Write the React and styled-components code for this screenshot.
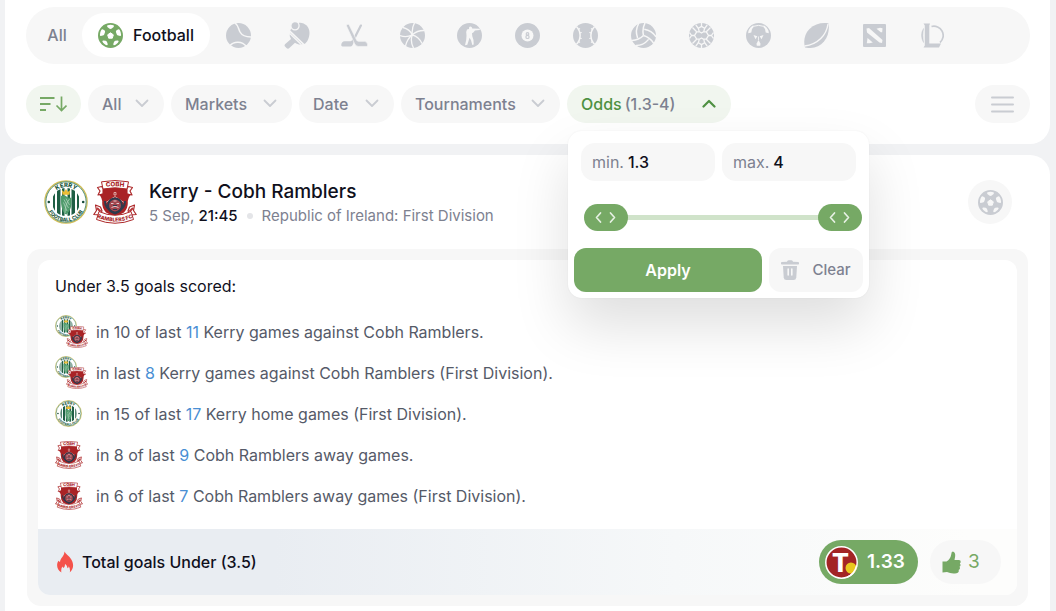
import React, { useState } from "react";
import styled, { createGlobalStyle, css } from "styled-components";

const c = {
  page: "#f1f2f4",
  pill: "#f7f7f7",
  icon: "#c9ccd2",
  muted: "#7d8190",
  text: "#555a68",
  dark: "#10101c",
  green: "#76a965",
  deepGreen: "#4f9142",
  paleGreen: "#f1f6ef",
  link: "#4a8fd4",
};

const GlobalStyle = createGlobalStyle`
  * { box-sizing: border-box; }
  body {
    margin: 0;
    background: ${c.page};
    color: ${c.dark};
    font-family: Inter, "Liberation Sans", sans-serif;
    font-size: 16px;
    line-height: 20px;
  }
  button, input { font: inherit; color: inherit; }
  button { border: 0; padding: 0; background: none; cursor: pointer; }
  h1, h2, p, ul { margin: 0; padding: 0; }
  svg { display: block; flex: none; }
`;

/* ---------- layout ---------- */

const Page = styled.div`
  min-height: 100vh;
  display: flex;
  flex-direction: column;
  gap: 11px;
  padding: 0 6px 0 5px;
`;

const TopCard = styled.header`
  display: flex;
  flex-direction: column;
  gap: 21px;
  padding: 7px 20px 21px 21px;
  background: #fff;
  border-radius: 0 0 20px 20px;
`;

const SportsBar = styled.nav`
  display: flex;
  align-items: center;
  height: 57px;
  padding: 0 69px 1px 6px;
  border-radius: 29px;
  background: ${c.pill};
`;

const SportTab = styled.button`
  display: flex;
  align-items: center;
  justify-content: center;
  gap: 10px;
  height: 44px;
  border-radius: 22px;
  font-weight: 500;
  color: ${(p) => (p.$active ? c.dark : c.muted)};
  background: ${(p) => (p.$active ? "#fff" : "transparent")};
  min-width: ${(p) => (p.$active ? "128px" : "50px")};
  svg { color: ${(p) => (p.$active ? c.green : c.icon)}; }
`;

const SportGrid = styled.div`
  flex: 1;
  display: grid;
  grid-template-columns: repeat(13, 1fr);
`;

const SportIconButton = styled.button`
  display: flex;
  align-items: center;
  justify-content: center;
  height: 44px;
  color: ${c.icon};
`;

const Filters = styled.div`
  display: flex;
  gap: 7px;
`;

const FilterSlot = styled.div`
  position: relative;
  display: flex;
`;

const FilterButton = styled.button`
  display: flex;
  align-items: center;
  justify-content: space-between;
  height: 38px;
  min-width: ${(p) => p.$min}px;
  padding: 0 15px 1px 14px;
  border-radius: 19px;
  font-weight: 500;
  white-space: nowrap;
  color: ${c.muted};
  background: ${(p) => (p.$active ? c.paleGreen : c.pill)};
  strong { margin-right: 3px; font-weight: 500; color: ${c.deepGreen}; }
  svg { color: ${(p) => (p.$active ? c.deepGreen : c.icon)}; }
`;

const RoundButton = styled(FilterButton)`
  justify-content: center;
  padding: 0 14px;
  margin-left: ${(p) => (p.$end ? "auto" : "0")};
  svg { color: ${(p) => (p.$active ? c.green : c.icon)}; }
`;

/* ---------- odds popover ---------- */

const Popover = styled.form`
  position: absolute;
  z-index: 2;
  top: 46px;
  left: 1px;
  width: 301px;
  display: flex;
  flex-direction: column;
  padding: 12px 6px 6px;
  border-radius: 14px;
  background: #fff;
  box-shadow: 0 0 2px rgba(0, 0, 0, 0.06), 0 28px 56px rgba(0, 0, 0, 0.13);
`;

const Limits = styled.div`
  display: flex;
  gap: 7px;
  padding: 0 7px;
`;

const Limit = styled.label`
  flex: 1;
  min-width: 0;
  display: flex;
  align-items: center;
  gap: 4px;
  height: 38px;
  padding: 0 11px;
  border-radius: 14px;
  color: ${c.muted};
  background: ${c.pill};
`;

const LimitInput = styled.input`
  flex: 1;
  min-width: 0;
  padding: 0;
  border: 0;
  outline: 0;
  background: none;
  font-weight: 500;
  color: ${c.dark};
`;

const RangeTrack = styled.div`
  display: grid;
  align-items: center;
  height: 27px;
  margin: 23px 1px 17px 10px;
  background: linear-gradient(#d0e3ca, #d0e3ca) center / 90% 5px no-repeat;
`;

const arrows = encodeURIComponent(
  '<svg xmlns="http://www.w3.org/2000/svg" width="44" height="27" fill="none" stroke="#e6f0e3" stroke-width="1.7" stroke-linecap="round" stroke-linejoin="round"><path d="M16.5 9 12.500 13.500 16.500 18M26.500 9 30.500 13.500 26.500 18"/></svg>'
);

const RangeInput = styled.input`
  grid-area: 1 / 1;
  appearance: none;
  width: 100%;
  height: 27px;
  margin: 0;
  background: none;
  pointer-events: none;
  &::-webkit-slider-thumb {
    appearance: none;
    pointer-events: auto;
    width: 44px;
    height: 27px;
    border-radius: 14px;
    background: ${c.green} url("data:image/svg+xml,${arrows}") center no-repeat;
  }
`;

const Actions = styled.div`
  display: flex;
  gap: 7px;
`;

const ActionButton = styled.button`
  display: flex;
  align-items: center;
  justify-content: center;
  height: 44px;
  border-radius: 12px;
  ${(p) =>
    p.$primary
      ? css`
          flex: 1;
          font-weight: 600;
          color: #fff;
          background: ${c.green};
        `
      : css`
          gap: 13px;
          width: 94px;
          font-size: 15px;
          font-weight: 500;
          color: ${c.muted};
          background: ${c.pill};
          svg { color: ${c.icon}; }
        `}
`;

/* ---------- match card ---------- */

const MatchCard = styled.main`
  flex: 1;
  padding: 25px 22px 5px;
  background: #fff;
  border-radius: 20px 20px 0 0;
`;

const MatchHead = styled.div`
  display: flex;
  align-items: center;
  gap: 12px;
  padding: 0 16px 0 17px;
`;

const Crests = styled.div`
  display: flex;
  gap: 5px;
`;

const MatchInfo = styled.div`
  flex: 1;
  display: flex;
  flex-direction: column;
  gap: 4px;
`;

const MatchTitle = styled.h1`
  font-size: 19px;
  font-weight: 500;
  line-height: 24px;
`;

const MatchMeta = styled.p`
  display: flex;
  align-items: center;
  font-size: 15px;
  line-height: 16px;
  color: ${c.muted};
  white-space: pre;
  time { font-weight: 500; color: ${c.dark}; }
`;

const Dot = styled.span`
  width: 6px;
  height: 6px;
  margin: 0 9px;
  border-radius: 50%;
  background: #e4e5e8;
`;

const SportBadge = styled.span`
  display: grid;
  place-items: center;
  width: 44px;
  height: 44px;
  border-radius: 50%;
  color: ${c.icon};
  background: ${c.pill};
`;

const Panel = styled.section`
  margin-top: 25px;
  padding: 11px;
  border-radius: 14px;
  background: ${c.pill};
`;

const PanelInner = styled.div`
  overflow: hidden;
  border-radius: 12px;
  background: #fff;
`;

const PanelBody = styled.div`
  padding: 16px 17px 13px;
`;

const PanelTitle = styled.h2`
  font-size: 16px;
  font-weight: 400;
  line-height: 20px;
`;

const FactList = styled.ul`
  margin-top: 15px;
  list-style: none;
`;

const Fact = styled.li`
  display: flex;
  align-items: center;
  gap: 8px;
  height: 41px;
  color: ${c.text};
  a { color: ${c.link}; text-decoration: none; }
`;

const FactCrest = styled.span`
  display: flex;
  width: 33px;
`;

const CrestPair = styled.span`
  display: grid;
  width: 33px;
  height: 33px;
  svg { grid-area: 1 / 1; }
  svg:last-child { place-self: end; }
`;

const PanelFoot = styled.div`
  display: flex;
  align-items: center;
  gap: 12px;
  height: 66px;
  padding: 0 16px 0 19px;
  background: linear-gradient(90deg, #e9edf2 0%, #e9edf2 24%, #f6f8f9 65%, #fdfdfc 95%);
`;

const Pick = styled.p`
  flex: 1;
  display: flex;
  align-items: center;
  gap: 8px;
  font-weight: 500;
`;

const FootButton = styled.button`
  display: flex;
  align-items: center;
  height: 44px;
  border-radius: 22px;
  ${(p) =>
    p.$odds
      ? css`
          gap: 9px;
          min-width: 99px;
          padding: 0 6px;
          font-size: 19px;
          font-weight: 600;
          color: #fff;
          background: ${c.green};
        `
      : css`
          gap: 7px;
          min-width: 71px;
          padding: 0 12px;
          font-size: 19px;
          color: ${c.green};
          background: ${c.pill};
        `}
`;

/* ---------- drawings ---------- */

const Svg = ({ w = 25, h = 25, children, ...rest }) => (
  <svg width={w} height={h} viewBox={`0 0 ${w} ${h}`} fill="currentColor" aria-hidden="true" {...rest}>
    {children}
  </svg>
);

const Cut = ({ width = 1.3, children, color = c.pill }) => (
  <g fill="none" stroke={color} strokeWidth={width} strokeLinejoin="round">{children}</g>
);

const Football = ({ cut = c.pill }) => (
  <Svg>
    <circle cx="12.5" cy="12.5" r="12.5" />
    <g fill={cut}>
      <path d="M12.500 9.800 15.300 11.800 14.300 15.200H10.700L9.700 11.800Z" stroke={cut} strokeLinejoin="round" />
      <path d="M9.500 2.300Q12.500 1.400 15.500 2.300Q16.300 3 15.600 4L13.800 5.600Q12.500 6.200 11.200 5.600L9.400 4Q8.700 3 9.500 2.300Z" />
      <path d="M3.400 6.800Q4.200 6 5.100 6.500L6.700 7.600Q7.300 8.300 7 9.200L6.200 11.400Q5.700 12.300 4.700 12.500L2.800 12.900Q1.900 12.800 1.900 11.900Q2 9 3.400 6.800Z" />
      <path d="M21.600 6.800Q20.800 6 19.900 6.500L18.300 7.600Q17.700 8.300 18 9.200L18.800 11.400Q19.300 12.300 20.300 12.500L22.200 12.900Q23.100 12.800 23.100 11.900Q23 9 21.600 6.800Z" />
      <path d="M4.300 18.300Q4.500 17.300 5.500 17.400L7.700 17.800Q8.600 18.200 9 19L9.700 20.900Q9.900 21.900 9.100 22.200Q8 22.200 6.500 21Q4.800 19.700 4.300 18.300Z" />
      <path d="M20.700 18.300Q20.500 17.300 19.500 17.400L17.300 17.800Q16.400 18.200 16 19L15.300 20.900Q15.100 21.900 15.900 22.200Q17 22.200 18.500 21Q20.200 19.700 20.700 18.300Z" />
    </g>
  </Svg>
);

const Tennis = () => (
  <Svg>
    <circle cx="12.5" cy="12.5" r="12.5" />
    <Cut width={1.5}>
      <path d="M9 0C12.500 2.500 12.300 6 14 9C16.300 13 20 14 25 14" />
      <path d="M4 22.500C8 18 16 18 20.500 23.500" />
    </Cut>
  </Svg>
);

const TableTennis = () => (
  <Svg w={26} h={27}>
    <path d="M14.500 1C20 0 25.500 4.500 25.500 11C25.500 16 23 20.500 20.500 22L6.300 8.500C7.600 4.500 10.500 1.800 14.500 1Z" />
    <path d="M6 10.500 18.500 22.200C16 23 13.300 22.400 11 20.700L4.800 26.500Q3.500 27 2.500 26L.8 24.200Q.1 23.200 1 22.300L7 17Q5 14 6 10.500Z" />
    <Cut width={1.3}><path d="M5.500 11.200 17.500 22.700" /></Cut>
    <circle cx="11" cy="3.800" r="4.100" stroke={c.pill} strokeWidth="1.300" />
  </Svg>
);

const Hockey = () => (
  <Svg w={27} h={23}>
    <path d="M19 .8Q19.500 .1 20.500 .6Q21.300 1 21 1.800L12.500 18.500Q11.500 22.400 9.500 22.400H1.500Q.2 22.400.2 21Q.8 17.400 3.500 17.300H9.500Q10.800 17 11.500 15.500Z" />
    <path d="M5.400 1.800Q5.200 .9 6.200 .5Q7.500 0 8.100.8L15.700 16.300Q16.200 17.300 17.500 17.300H23.500Q26.300 17.500 26.800 21Q26.800 22.400 25.500 22.400H17.200Q14.500 22.400 13.500 19.500Z" stroke={c.pill} strokeWidth=".7" />
  </Svg>
);

const Basketball = () => (
  <Svg>
    <circle cx="12.500" cy="12.500" r="12.500" />
    <Cut width={1.3}>
      <path d="M12.300 11.800C11.800 7.500 12.500 3.500 14.500 0" />
      <path d="M12.300 11.800C15.500 9 20 7.300 24.500 7.500" />
      <path d="M3 4.500C7 5.500 10.500 8 12.300 11.800" />
      <path d="M0 12.500C4 14 8.500 13.800 12.300 11.800" />
      <path d="M5.500 23C6.500 18.500 9 14.500 12.300 11.800" />
      <path d="M12.300 11.800C16 12.800 20 16 22 20.500" />
      <path d="M12.300 11.800C10.800 16 11.300 21 13.500 25" />
    </Cut>
  </Svg>
);

const Shooter = () => (
  <Svg>
    <circle cx="12.500" cy="12.500" r="12.500" />
    <path fill={c.pill} d="M12.200 3.900Q13.500 3 14.800 4.300L15.200 5.500 22.800 5.800 22.800 7 18 7.400 16.300 9.500 15 10.300 15.300 13.300 16.500 17 16.700 21.500 15.300 22 14.100 17.500 12.600 14.800 11.700 17.500 10.300 21.700 8 22.300 9.200 17 9.500 12.500 9.200 9 10 6.500 12 6Z" />
  </Svg>
);

const Billiards = () => (
  <Svg>
    <circle cx="12.500" cy="12.500" r="12.500" />
    <circle cx="12.500" cy="12.500" r="6" fill={c.pill} />
    <g fill="none" stroke="currentColor" strokeWidth="1.200">
      <circle cx="12.500" cy="10.900" r="1.300" />
      <circle cx="12.500" cy="13.900" r="1.600" />
    </g>
  </Svg>
);

const Baseball = () => (
  <Svg>
    <circle cx="12.500" cy="12.500" r="12.500" />
    <Cut width={1.5}>
      <path d="M3.500 3.800C8.300 8.500 8.300 16.500 3.500 21.200M21.500 3.800C16.700 8.500 16.700 16.500 21.500 21.200" />
    </Cut>
    <Cut width={1.1}>
      <path d="M7 5.500 5 6.800M8.700 9.500 6 10M8.700 15.500 6 15M7 19.500 5 18.200M18 5.500 20 6.800M16.300 9.500 19 10M16.300 15.500 19 15M18 19.500 20 18.200" />
    </Cut>
  </Svg>
);

const Volleyball = () => (
  <Svg>
    <circle cx="12.500" cy="12.500" r="12.500" />
    <Cut width={1.5}>
      {[0, 120, 240].map((angle) => (
        <g key={angle} transform={`rotate(${angle} 12.500 12.500)`}>
          <path d="M12.500 12.500C11.500 8.500 12 4 14 0" />
          <path d="M6.600 15C4.800 10 5.200 5 7.500 1" />
        </g>
      ))}
    </Cut>
  </Svg>
);

const Handball = () => (
  <Svg>
    <circle cx="12.500" cy="12.500" r="12.500" />
    <Cut width={1.300}>
      <path d="M5.500 12.500 7.700 8.800 10.500 8.800 12.500 10 14.500 8.800 17.300 8.800 19.500 12.500 17.300 16.200 14.500 16.200 12.500 15 10.500 16.200 7.700 16.200Z" />
      <path d="M10.300 8.800 9.400 5.300 12.500 3.400 15.600 5.300 14.700 8.800M10.300 16.200 9.400 19.700 12.500 21.600 15.600 19.700 14.700 16.200" />
      <path d="M12.500 3.400V0M12.500 21.600V25M9.400 5.300 6.800 2M15.600 5.300 18.200 2M9.400 19.700 6.800 23M15.600 19.700 18.200 23" />
      <path d="M7.700 8.800 3.500 4.500M17.300 8.800 21.500 4.500M7.700 16.200 3.500 20.500M17.300 16.200 21.500 20.500" />
      <path d="M5.500 12.500H2.600L.5 9.500M2.600 12.500 .5 15.500M19.500 12.500H22.400L24.500 9.500M22.400 12.500 24.500 15.500" />
    </Cut>
  </Svg>
);

const Futsal = () => (
  <Svg>
    <circle cx="12.500" cy="12.500" r="12.500" />
    <g fill={c.pill}>
      <path d="M2.800 7Q4.300 3.800 7.200 2.200L8 3.500 6 6 5.300 9.500 2.200 10.300Q2.200 8.500 2.800 7Z" />
      <path d="M22.200 7Q20.700 3.800 17.800 2.200L17 3.500 19 6 19.700 9.500 22.800 10.300Q22.800 8.500 22.200 7Z" />
      <path d="M7.500 12 11.300 13.300 9.500 16.200Z" />
      <path d="M17.500 12 13.700 13.300 15.500 16.200Z" />
      <path d="M12.500 17 14.500 20.800 14.200 22.800H10.800L10.500 20.800Z" />
    </g>
    <Cut width={1}>
      <path d="M8 3.200Q12.500 1.600 17 3.200" />
      <path d="M12.500 13.500V17" strokeWidth=".8" />
    </Cut>
  </Svg>
);

const Rugby = () => (
  <Svg>
    <path d="M24.500.4C25.500 6 24.500 13 20 18.500C15.500 24 8 26 1 24.600C-.8 18 .5 11 5.500 6C10.500 1 18 -.8 24.500.4Z" />
    <Cut width={1.4}>
      <path d="M24 1C22.500 12 14 21.500 .5 23" />
    </Cut>
  </Svg>
);

const Dota = () => (
  <Svg w={23} h={23}>
    <rect width="23" height="23" rx="1" />
    <g fill={c.pill}>
      <path d="M3.500 4.500 6 4 19.500 16 19 19 16.500 18.500 4 8.500Z" />
      <path d="M13.500 4.800 17 3.800 19.500 4.300 19.200 8.300 17.800 8.300Z" />
      <path d="M4.500 14 9.800 18.500 6.500 19.200 3.800 19.200Z" />
    </g>
  </Svg>
);

const Legends = () => (
  <Svg w={23} h={25}>
    <path d="M2.500.5H9L8.300 2.500V20.500H20L18 24.500H2.500L3.800 22.500V2.500Z" />
    <path d="M10.500 3.500A9.300 9.300 0 0 1 19 19.500" fill="none" stroke="currentColor" strokeWidth="1.700" />
    <path d="M2.500 5.500Q-1.500 12 2.500 19.500Q1.200 12 2.500 5.500Z" stroke="currentColor" strokeWidth=".5" />
  </Svg>
);

const Chevron = ({ up }) => (
  <Svg w={14} h={9}>
    <path
      d={up ? "M1.500 7.500 7 2 12.500 7.500" : "M1.500 1.500 7 7 12.500 1.500"}
      fill="none" stroke="currentColor" strokeWidth={up ? 2.2 : 1.8} strokeLinecap="round" strokeLinejoin="round"
    />
  </Svg>
);

const SortIcon = () => (
  <Svg w={27} h={16}>
    <path d="M0 2H14.500M0 8H10.500M0 14H6" stroke="currentColor" strokeWidth="2" />
    <path d="M21.500.5V14.500M16.500 9.500 21.500 14.500 26.500 9.500" fill="none" stroke="currentColor" strokeWidth="1.700" />
  </Svg>
);

const MenuIcon = () => (
  <Svg w={23} h={17}>
    <path d="M1 1.500H22M1 8.500H22M1 15.500H22" stroke="currentColor" strokeWidth="2" strokeLinecap="round" />
  </Svg>
);

const Trash = () => (
  <Svg w={18} h={20}>
    <path d="M6 1.800Q6.200.3 7.500.3H10.500Q11.800.3 12 1.800L17.200 2Q18 2.200 18 3V3.800Q18 4.500 17.200 4.500H.8Q0 4.500 0 3.800V3Q0 2.200.8 2Z" />
    <path d="M2 6H16L15.300 17.500Q15 20 12.500 20H5.500Q3 20 2.700 17.500Z" />
    <path d="M7.200 9V15M10.800 9V15" stroke={c.pill} strokeWidth="1.600" strokeLinecap="round" />
  </Svg>
);

const Flame = () => (
  <Svg w={17} h={22}>
    <path
      fill="#f4524b"
      d="M7.500.5C8.500 3 12 4.800 14 8C16.500 12 17.500 17 12.800 21.500C13.300 19 12.800 17 11.800 15.200C11.600 16.500 11.200 17 10.500 17.300C10.300 15.500 9.500 14 8 13C8 15 7.500 16 6.500 17C6 16.500 5.500 16 5.300 15.500C4.200 17.500 4 19.500 4.400 21.500C-.5 18.500-.8 13 1.500 9.800C2 10.500 2.400 10.800 3 11C3.300 7 7.500 5 7.500.5Z"
    />
  </Svg>
);

const Thumb = () => (
  <Svg w={19} h={23}>
    <path d="M.5 10.500H4.500Q8.500 8 9.200 3.500Q9.400.7 10.800.5Q13.500 1 13.200 5L12.500 9H17Q18.800 9.300 18.700 10.800Q18.700 12 17.800 12.500Q18.800 13.300 18.500 14.500Q18.300 15.500 17.500 15.800Q18.300 16.700 17.900 17.800Q17.500 18.800 16.600 19Q17.200 20 16.500 21Q16 22 14.500 22.200Q9 23 5 21L.5 21.500Z" />
  </Svg>
);

const BookmakerLogo = () => (
  <Svg w={33} h={33}>
    <circle cx="16.500" cy="16.500" r="15.700" fill="#a32425" stroke="#fff" strokeWidth="1.500" />
    <text x="15.500" y="26" textAnchor="middle" fontFamily="Roboto, sans-serif" fontWeight="900" fontSize="26" fill="#fff">T</text>
    <circle cx="26" cy="22" r="5.500" fill="#e9c81f" />
    <path d="M31.500 20A15.700 15.700 0 0 1 22 31.200" fill="none" stroke="#fff" strokeWidth="1.500" />
  </Svg>
);

const KerryCrest = ({ size }) => (
  <svg width={size} height={size} viewBox="0 0 44 44" role="img" aria-label="Kerry">
    <defs>
      <path id="kerry-top" d="M7 22A15 15 0 0 1 37 22" />
      <path id="kerry-bottom" d="M2.500 22A19.500 19.500 0 0 0 41.500 22" />
      <clipPath id="kerry-core"><circle cx="22" cy="22" r="14" /></clipPath>
    </defs>
    <circle cx="22" cy="22" r="21.200" fill="#fff" stroke="#d3bd55" strokeWidth="1.200" />
    <circle cx="22" cy="22" r="20.200" fill="none" stroke="#3d7f5f" strokeWidth=".9" />
    <g clipPath="url(#kerry-core)">
      <path fill="#1f5f45" d="M9 8h2v28H9zM13 8h3.500v28H13zM18 8h2.500v28H18zM23.500 8H26v28h-2.500zM27.500 8H31v28h-3.500zM33 8h2v28h-2z" />
      <path fill="#4f9b6c" d="M17 16Q20 14.500 22.500 16.500 25 18.500 27.500 17.500V24Q27 30 22.500 34.500 20 34 18.500 30 16.500 25 17 16Z" />
      <path d="M20 19.500 24.500 28M22 18.500 25.500 25M19.500 22.500 23 31M25.500 19Q21 24 21 33" stroke="#b7d8c3" strokeWidth=".7" fill="none" />
      <path fill="#edbd34" d="M17.800 10 20.200 12 22 9 23.800 12 26.200 10 25.500 14.800H18.500Z" />
    </g>
    <circle cx="4.800" cy="22" r="1.300" fill="#174a39" />
    <circle cx="39.200" cy="22" r="1.300" fill="#174a39" />
    <g fill="#1e5a41" fontFamily="Inter, sans-serif" fontWeight="800" textAnchor="middle">
      <text fontSize="6"><textPath href="#kerry-top" startOffset="50%">KERRY</textPath></text>
      <text fontSize="5"><textPath href="#kerry-bottom" startOffset="50%">FOOTBALL CLUB</textPath></text>
    </g>
  </svg>
);

const CobhCrest = ({ size }) => (
  <svg width={size} height={size} viewBox="0 0 44 44" role="img" aria-label="Cobh Ramblers">
    <defs>
      <path id="cobh-top" d="M10 7.300Q22 5.300 34 7.300" />
      <path id="cobh-bottom" d="M4 37.500Q22 45.500 40 37.500" />
    </defs>
    <path fill="#fff" stroke="#ad2a2b" strokeWidth="1.200" strokeLinejoin="round" d="M8.500 6.500 4.500 7.500 7 11 5 15 10.500 14V9ZM35.500 6.500 39.500 7.500 37 11 39 15 33.500 14V9Z" />
    <path fill="#a92326" d="M9.500 8.500Q22 6.500 34.500 8.500V13.500L38 14.500Q34.500 18 34.800 23 35 28 31 32.500L22 37 13 32.500Q9 28 9.200 23 9.500 18 6 14.500L9.500 13.500Z" />
    <path fill="#fff" stroke="#ad2a2b" strokeWidth="1" strokeLinejoin="round" d="M8.500 1.800Q22-.8 35.500 1.800L34 9Q22 6.500 10 9Z" />
    <path fill="none" stroke="#eac4c2" strokeWidth=".8" d="M21 12.500H23V15H21ZM22 16.500 13 22.500M22 16.500 31 22.500" />
    <circle cx="22" cy="25.500" r="7" fill="#a3464e" stroke="#2f3a4c" strokeWidth="2" />
    <path d="M12 21Q11.500 28.500 22 33.500Q32.500 28.500 32 21" fill="none" stroke="#2f3a4c" strokeWidth="2" />
    <path d="M18 23.500H20.500M23.500 23.500H26M18.500 27.500Q22 25 25.500 27.500M20.500 21H23.500" stroke="#e3c6ca" strokeWidth="1" fill="none" />
    <path d="M20 25.500H24M20 29.500H24" stroke="#2f3a4c" strokeWidth="1" />
    <path fill="#fff" stroke="#ad2a2b" strokeWidth="1.200" strokeLinejoin="round" d="M2.500 25 7.500 27 9 31 6.500 35 .8 34.500 3.500 30.500ZM41.500 25 36.500 27 35 31 37.500 35 43.200 34.500 40.500 30.500Z" />
    <path d="M4 28 7.500 31.500M40 28 36.500 31.500" stroke="#b8383a" strokeWidth="2" />
    <path fill="#fff" stroke="#ad2a2b" strokeWidth="1" strokeLinejoin="round" d="M6 31.500Q22 39 38 31.500L40.500 39.500Q22 47 3.500 39.500Z" />
    <g fill="#a92326" fontFamily="Inter, sans-serif" fontWeight="800" textAnchor="middle">
      <text fontSize="6.200"><textPath href="#cobh-top" startOffset="50%">COBH</textPath></text>
      <text fontSize="5.200"><textPath href="#cobh-bottom" startOffset="50%">RAMBLERS FC</textPath></text>
    </g>
  </svg>
);

/* ---------- data ---------- */

const sports = [
  ["Tennis", Tennis],
  ["Table tennis", TableTennis],
  ["Ice hockey", Hockey],
  ["Basketball", Basketball],
  ["Counter-Strike", Shooter],
  ["Billiards", Billiards],
  ["Baseball", Baseball],
  ["Volleyball", Volleyball],
  ["Handball", Handball],
  ["Futsal", Futsal],
  ["Rugby", Rugby],
  ["Dota 2", Dota],
  ["League of Legends", Legends],
];

const filters = [
  ["All", 76],
  ["Markets", 121],
  ["Date", 95],
  ["Tournaments", 159],
];

const facts = [
  { team: "both", before: "in 10 of last ", count: 11, after: " Kerry games against Cobh Ramblers." },
  { team: "both", before: "in last ", count: 8, after: " Kerry games against Cobh Ramblers (First Division)." },
  { team: "kerry", before: "in 15 of last ", count: 17, after: " Kerry home games (First Division)." },
  { team: "cobh", before: "in 8 of last ", count: 9, after: " Cobh Ramblers away games." },
  { team: "cobh", before: "in 6 of last ", count: 7, after: " Cobh Ramblers away games (First Division)." },
];

const TeamCrest = ({ team }) => {
  if (team === "both") {
    return (
      <CrestPair>
        <KerryCrest size={22} />
        <CobhCrest size={22} />
      </CrestPair>
    );
  }
  return team === "kerry" ? <KerryCrest size={27} /> : <CobhCrest size={28} />;
};

const OddsFilter = () => {
  const [min, setMin] = useState(1.3);
  const [max, setMax] = useState(4);
  return (
    <FilterSlot>
      <FilterButton type="button" $active $min={164} aria-expanded="true">
        <span><strong>Odds</strong>({min}-{max})</span>
        <Chevron up />
      </FilterButton>
      <Popover onSubmit={(e) => e.preventDefault()}>
        <Limits>
          <Limit>min. <LimitInput value={min} onChange={(e) => setMin(e.target.value)} /></Limit>
          <Limit>max. <LimitInput value={max} onChange={(e) => setMax(e.target.value)} /></Limit>
        </Limits>
        <RangeTrack>
          <RangeInput type="range" aria-label="Minimum odds" min="1.3" max="4" step="0.1" value={min} onChange={(e) => setMin(e.target.value)} />
          <RangeInput type="range" aria-label="Maximum odds" min="1.3" max="4" step="0.1" value={max} onChange={(e) => setMax(e.target.value)} />
        </RangeTrack>
        <Actions>
          <ActionButton type="submit" $primary>Apply</ActionButton>
          <ActionButton type="button"><Trash />Clear</ActionButton>
        </Actions>
      </Popover>
    </FilterSlot>
  );
};

export default function App() {
  return (
    <>
      <GlobalStyle />
      <Page>
        <TopCard>
          <SportsBar aria-label="Sports">
            <SportTab type="button">All</SportTab>
            <SportTab type="button" $active><Football cut="#fff" />Football</SportTab>
            <SportGrid>
              {sports.map(([name, Icon]) => (
                <SportIconButton key={name} type="button" aria-label={name}><Icon /></SportIconButton>
              ))}
            </SportGrid>
          </SportsBar>
          <Filters>
            <RoundButton type="button" $active $min={55} aria-label="Sort"><SortIcon /></RoundButton>
            {filters.map(([label, min]) => (
              <FilterButton key={label} type="button" $min={min} aria-expanded="false">
                {label}
                <Chevron />
              </FilterButton>
            ))}
            <OddsFilter />
            <RoundButton type="button" $end $min={55} aria-label="View"><MenuIcon /></RoundButton>
          </Filters>
        </TopCard>

        <MatchCard>
          <MatchHead>
            <Crests><KerryCrest size={44} /><CobhCrest size={44} /></Crests>
            <MatchInfo>
              <MatchTitle>Kerry - Cobh Ramblers</MatchTitle>
              <MatchMeta>5 Sep, <time>21:45</time><Dot />Republic of Ireland: First Division</MatchMeta>
            </MatchInfo>
            <SportBadge><Football /></SportBadge>
          </MatchHead>
          <Panel>
            <PanelInner>
              <PanelBody>
                <PanelTitle>Under 3.5 goals scored:</PanelTitle>
                <FactList>
                  {facts.map((f) => (
                    <Fact key={f.before + f.count}>
                      <FactCrest><TeamCrest team={f.team} /></FactCrest>
                      <span>{f.before}<a href="#games">{f.count}</a>{f.after}</span>
                    </Fact>
                  ))}
                </FactList>
              </PanelBody>
              <PanelFoot>
                <Pick><Flame />Total goals Under (3.5)</Pick>
                <FootButton type="button" $odds><BookmakerLogo />1.33</FootButton>
                <FootButton type="button"><Thumb />3</FootButton>
              </PanelFoot>
            </PanelInner>
          </Panel>
        </MatchCard>
      </Page>
    </>
  );
}
